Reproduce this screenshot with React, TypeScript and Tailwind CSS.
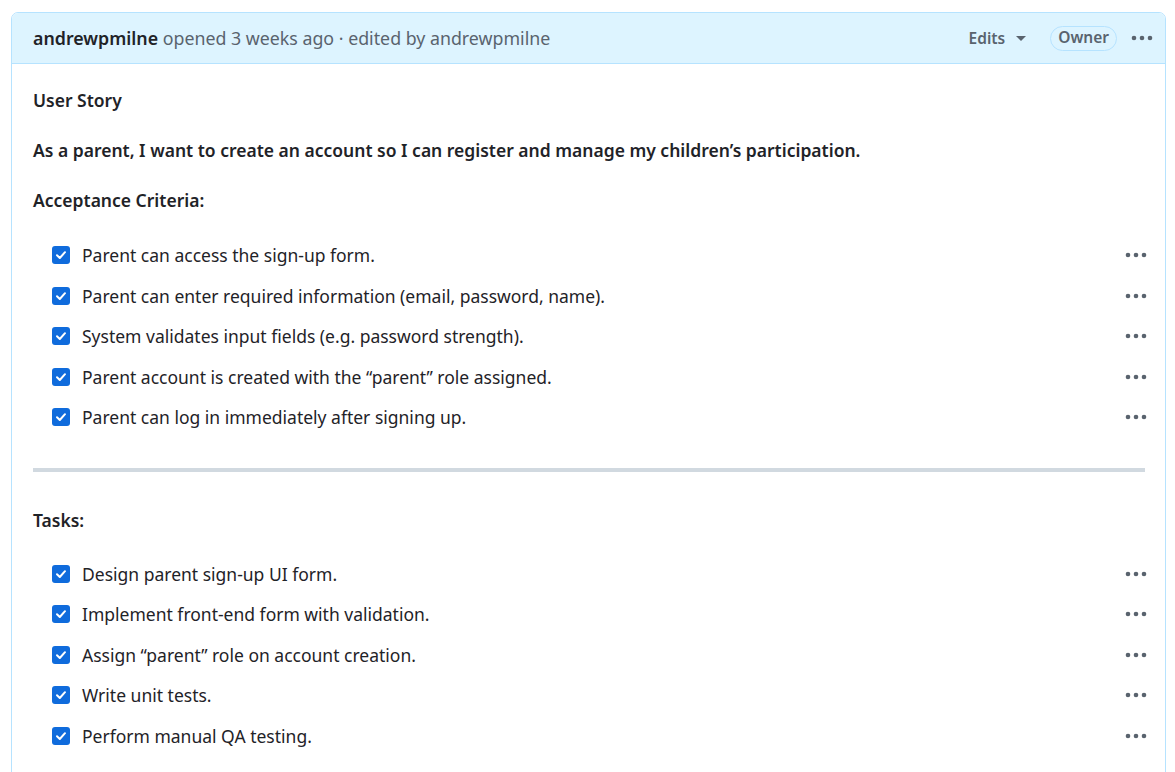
import React from "react";

const criteria = [
  "Parent can access the sign-up form.",
  "Parent can enter required information (email, password, name).",
  "System validates input fields (e.g. password strength).",
  "Parent account is created with the \u201cparent\u201d role assigned.",
  "Parent can log in immediately after signing up.",
];

const tasks = [
  "Design parent sign-up UI form.",
  "Implement front-end form with validation.",
  "Assign \u201cparent\u201d role on account creation.",
  "Write unit tests.",
  "Perform manual QA testing.",
];

function Dots({ className = "" }: { className?: string }) {
  return (
    <svg width="22" height="6" viewBox="0 0 22 6" className={className}>
      <circle cx="3" cy="3" r="2.3" fill="#59636e" />
      <circle cx="11" cy="3" r="2.3" fill="#59636e" />
      <circle cx="19" cy="3" r="2.3" fill="#59636e" />
    </svg>
  );
}

function Check() {
  return (
    <div className="w-[18px] h-[18px] rounded-[3px] bg-[#0f6bdc] flex items-center justify-center shrink-0">
      <svg width="12" height="12" viewBox="0 0 12 12">
        <path d="M2 6.3 L4.8 9 L10 3.2" stroke="white" strokeWidth="2" fill="none" strokeLinecap="round" strokeLinejoin="round" />
      </svg>
    </div>
  );
}

function Item({ text }: { text: string }) {
  return (
    <div className="flex items-center h-[40.5px]">
      <div className="pl-[19px] pr-[12px] flex items-center">
        <Check />
      </div>
      <div className="flex-1 text-[#1f2328]">{text}</div>
      <Dots className="mr-[-2px]" />
    </div>
  );
}

export default function App() {
  return (
    <div
      className="w-[1175px] h-[772px] bg-white overflow-hidden pt-[12px] pl-[11px] pr-[9px]"
      style={{ fontFamily: '"Noto Sans", "Open Sans", sans-serif' }}
    >
      <div className="border border-[#b6e3ff] rounded-t-[7px] h-[800px] text-[17.5px]">
        <div className="h-[51px] bg-[#ddf4ff] border-b border-[#b6e3ff] rounded-t-[6px] flex items-center pl-[21px] pr-[12px]">
          <div className="flex-1 text-[#59636e] text-[17.8px]">
            <span className="font-semibold text-[#1f2328]">andrewpmilne</span> opened 3 weeks ago · edited by andrewpmilne
          </div>
          <div className="flex items-center text-[#59636e] font-semibold text-[15.5px] pt-[2px]">
            Edits
            <svg width="10" height="6" viewBox="0 0 10 6" className="ml-[11px]">
              <path d="M0 0 L10 0 L5 5 Z" fill="#59636e" />
            </svg>
          </div>
          <div className="ml-[24px] h-[25px] px-[7px] rounded-full border border-[#b6e3ff] text-[#59636e] font-semibold text-[15.5px] flex items-center">
            Owner
          </div>
          <Dots className="ml-[14px]" />
        </div>
        <div className="pl-[21px] pr-[20px]">
          <div className="font-semibold text-[#1f2328] pt-[24px] leading-[25px]">User Story</div>
          <div className="font-semibold text-[#1f2328] mt-[25px] leading-[25px]">
            As a parent, I want to create an account so I can register and manage my children’s participation.
          </div>
          <div className="font-semibold text-[#1f2328] mt-[25px] leading-[25px]">Acceptance Criteria:</div>
          <div className="mt-[22px]">
            {criteria.map((t) => (
              <Item key={t} text={t} />
            ))}
          </div>
          <div className="h-[4px] bg-[#d1d9e0] mt-[30px]" />
          <div className="font-semibold text-[#1f2328] mt-[36px] leading-[25px]">Tasks:</div>
          <div className="mt-[21px]">
            {tasks.map((t) => (
              <Item key={t} text={t} />
            ))}
          </div>
        </div>
      </div>
    </div>
  );
}
